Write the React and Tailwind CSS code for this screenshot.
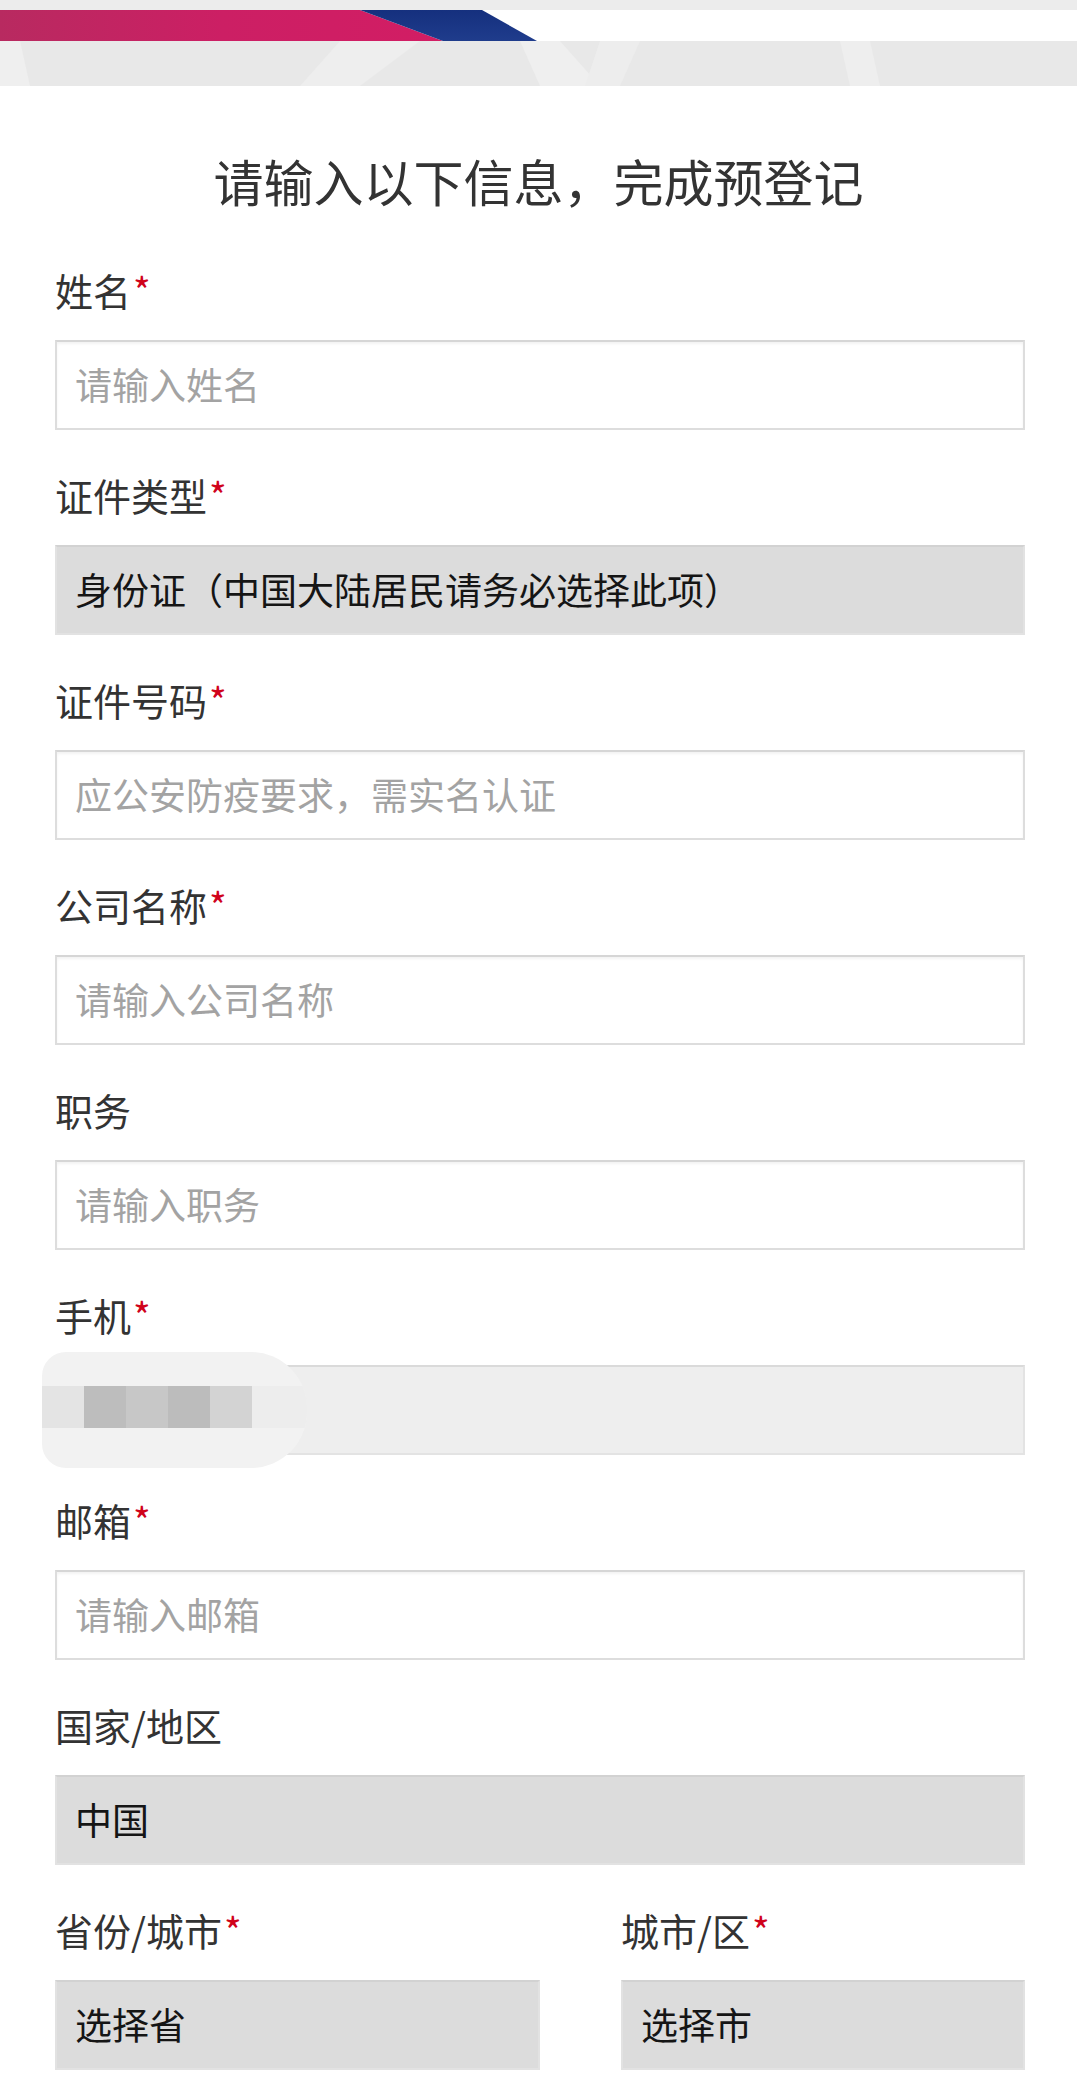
import React from 'react';

const cjk = { fontFamily: '"Noto Sans CJK SC", "Noto Sans", sans-serif' };

function Banner() {
  return (
    <div>
      <div className="h-[10px] bg-[#ececec]" />
      {/* ribbon stripe */}
      <svg width="1077" height="31" viewBox="0 0 1077 31" className="block">
        <defs>
          <linearGradient id="pink" x1="0" x2="1" y1="0" y2="0">
            <stop offset="0" stopColor="#b82a60" />
            <stop offset="0.5" stopColor="#cc1f64" />
            <stop offset="1" stopColor="#d21d64" />
          </linearGradient>
          <linearGradient id="blue" x1="0" x2="0" y1="0" y2="1">
            <stop offset="0" stopColor="#15307e" />
            <stop offset="1" stopColor="#1f3c8c" />
          </linearGradient>
        </defs>
        <rect width="1077" height="31" fill="#ffffff" />
        <polygon points="0,0 360,0 443,31 0,31" fill="url(#pink)" />
        <polygon points="360,0 482,0 537,31 443,31" fill="url(#blue)" />
      </svg>
      <div className="h-[45px] bg-[#e8e8e8] overflow-hidden">
        <svg width="1077" height="45" viewBox="0 0 1077 45" className="block">
          <polygon points="0,0 20,0 30,45 0,45" fill="#efefef" />
          <polygon points="340,0 420,0 360,45 300,45" fill="#eeeeee" />
          <polygon points="520,0 560,0 600,45 540,45" fill="#efefef" />
          <polygon points="600,0 640,0 620,45 585,45" fill="#ededed" />
          <polygon points="840,0 870,0 880,45 850,45" fill="#eeeeee" />
        </svg>
      </div>
    </div>
  );
}

function Label({ text, required }) {
  return (
    <div className="h-[44px] leading-[44px] text-[38px] text-[#333333] mb-[28px]">
      {text}
      {required && <span className="text-[#d0021b] ml-[2px]">*</span>}
    </div>
  );
}

function TextBox({ placeholder }) {
  return (
    <div className="h-[90px] bg-white border-2 border-[#dddddd] border-t-[#d6d6d6] shadow-[inset_0_2px_3px_rgba(0,0,0,0.05)] flex items-center pl-[18px] text-[37px] text-[#a3a3a3]">
      {placeholder}
    </div>
  );
}

function SelectBox({ value }) {
  return (
    <div className="h-[90px] bg-[#dcdcdc] border-2 border-[#e2e2e2] border-t-[#d2d2d2] flex items-center pl-[18px] text-[37px] text-[#151515] whitespace-pre">
      {value}
    </div>
  );
}

function PhoneBox() {
  return (
    <div className="relative">
      <div className="h-[90px] bg-[#eeeeee] border-2 border-[#e3e3e3] border-t-[#dadada]" />
      {/* mosaic over the number */}
      <div className="absolute left-[-13px] top-[-13px] w-[265px] h-[116px] bg-[#f2f2f2] rounded-l-[24px] rounded-r-[56px] overflow-hidden">
        <div className="absolute left-0 top-[34px] h-[42px] flex">
          <div className="w-[42px] h-full bg-[#e4e4e4]" />
          <div className="w-[42px] h-full bg-[#bdbdbd]" />
          <div className="w-[42px] h-full bg-[#c7c7c7]" />
          <div className="w-[42px] h-full bg-[#bcbcbc]" />
          <div className="w-[42px] h-full bg-[#d3d3d3]" />
          <div className="w-[55px] h-full bg-[#ededed]" />
        </div>
      </div>
    </div>
  );
}

function Field({ label, required, children }) {
  return (
    <div className="mb-[43px]">
      <Label text={label} required={required} />
      {children}
    </div>
  );
}

export default function App() {
  return (
    <div className="w-[1077px] h-[2084px] bg-white overflow-hidden" style={cjk}>
      <Banner />

      <h1 className="mt-[64px] h-[60px] leading-[60px] text-center text-[50px] font-normal text-[#333333]">
        请输入以下信息，完成预登记
      </h1>

      <div className="px-[55px] pr-[52px] mt-[58px]">
        <Field label="姓名" required>
          <TextBox placeholder="请输入姓名" />
        </Field>
        <Field label="证件类型" required>
          <SelectBox value="身份证（中国大陆居民请务必选择此项）" />
        </Field>
        <Field label="证件号码" required>
          <TextBox placeholder="应公安防疫要求，需实名认证" />
        </Field>
        <Field label="公司名称" required>
          <TextBox placeholder="请输入公司名称" />
        </Field>
        <Field label="职务">
          <TextBox placeholder="请输入职务" />
        </Field>
        <Field label="手机" required>
          <PhoneBox />
        </Field>
        <Field label="邮箱" required>
          <TextBox placeholder="请输入邮箱" />
        </Field>
        <Field label="国家/地区">
          <SelectBox value="中国" />
        </Field>

        <div className="flex">
          <div className="w-[485px]">
            <Label text="省份/城市" required />
            <SelectBox value="选择省" />
          </div>
          <div className="flex-1 ml-[81px]">
            <Label text="城市/区" required />
            <SelectBox value="选择市" />
          </div>
        </div>
      </div>
    </div>
  );
}
